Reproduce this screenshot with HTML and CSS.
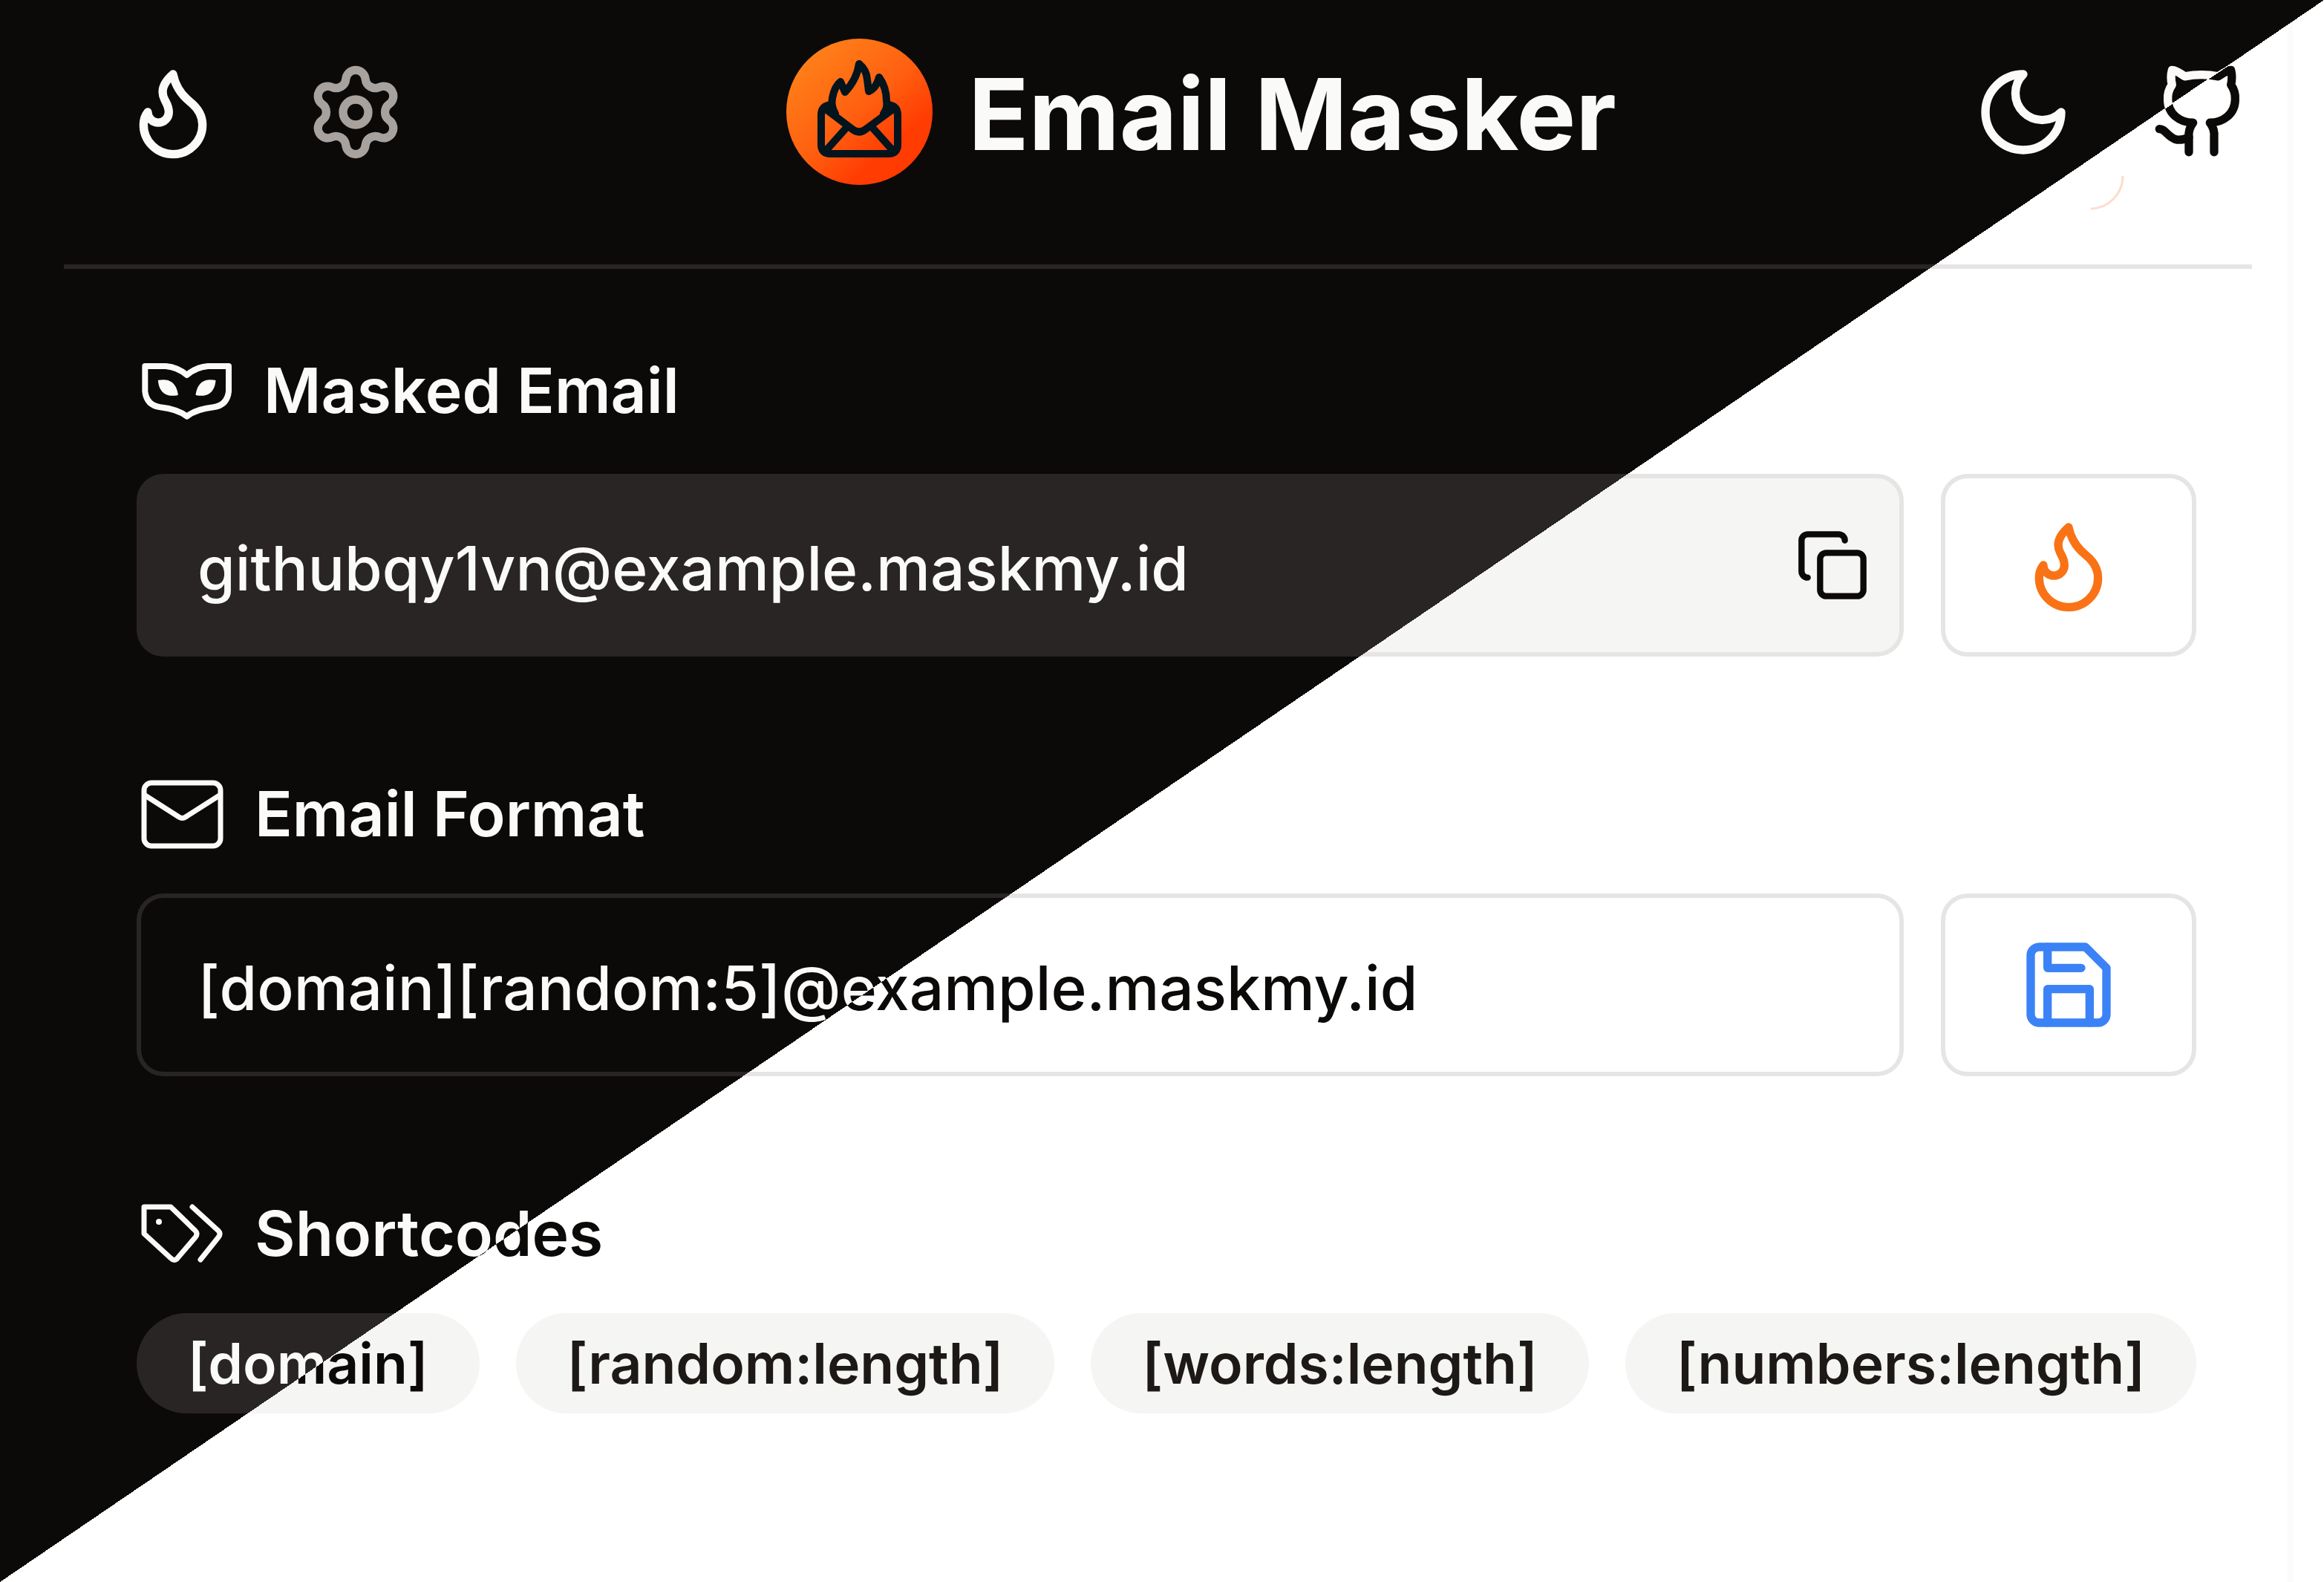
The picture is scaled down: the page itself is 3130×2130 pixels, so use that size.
FILE: index.html
```html
<!DOCTYPE html>
<html lang="en">
<head>
<meta charset="utf-8">
<meta name="viewport" content="width=device-width, initial-scale=1">
<title>Email Masker</title>
<link rel="stylesheet" href="styles.css">
</head>
<body>
<header class="header">
  <nav class="nav nav-start" aria-label="Views">
    <button class="icon-button" type="button" aria-label="Mask">
      <svg class="icon" viewBox="0 0 24 24"><path d="M8.5 14.5A2.5 2.5 0 0 0 11 12c0-1.38-.5-2-1-3-1.072-2.143-.224-4.054 2-6 .5 2.5 2 4.9 4 6.5 2 1.6 3 3.5 3 5.5a7 7 0 1 1-14 0c0-1.153.433-2.294 1-3a2.5 2.5 0 0 0 2.5 2.5z"/></svg>
    </button>
    <button class="icon-button muted" type="button" aria-label="Settings">
      <svg class="icon" viewBox="0 0 24 24"><path d="M9.671 4.136a2.34 2.34 0 0 1 4.659 0 2.34 2.34 0 0 0 3.319 1.915 2.34 2.34 0 0 1 2.33 4.033 2.34 2.34 0 0 0 0 3.831 2.34 2.34 0 0 1-2.33 4.033 2.34 2.34 0 0 0-3.319 1.915 2.34 2.34 0 0 1-4.659 0 2.34 2.34 0 0 0-3.32-1.915 2.34 2.34 0 0 1-2.33-4.033 2.34 2.34 0 0 0 0-3.831A2.34 2.34 0 0 1 6.35 6.051a2.34 2.34 0 0 0 3.319-1.915"/><circle cx="12" cy="12" r="3"/></svg>
    </button>
  </nav>
  <div class="brand">
    <svg class="logo" viewBox="0 0 197 197" aria-hidden="true">
      <defs>
        <linearGradient id="logo-fill" x1="0.15" y1="0.1" x2="0.85" y2="0.9">
          <stop offset="0" stop-color="#ff8019"/><stop offset="0.5" stop-color="#ff5f10"/><stop offset="0.8" stop-color="#ff3d03"/><stop offset="1" stop-color="#ff3a00"/>
        </linearGradient>
      </defs>
      <circle cx="98.500" cy="98.500" r="98.500" fill="url(#logo-fill)"/>
      <g fill="none" stroke="#04141d" stroke-width="10" stroke-linejoin="round" stroke-linecap="round">
        <path d="M61 89Q47 90 47 103V143Q47 155 60 155H137Q150 155 150 143V103Q150 90 136 89"/>
        <path d="M52 94 89 122Q98 129 107 122L145 94"/>
        <path d="M55 149 80 121M142 149 117 121"/>
        <path d="M66 101Q60 91 62 80Q65 64 73 58L79 72Q95 55 98 34Q108 42 109 55L111 71Q121 67 125 52Q135 66 135 84Q137 93 131 101"/>
      </g>
    </svg>
    <h1 class="title">Email Masker</h1>
  </div>
  <nav class="nav nav-end" aria-label="Links">
    <button class="icon-button" type="button" aria-label="Toggle theme">
      <svg class="icon" viewBox="0 0 24 24"><path d="M12 3a6 6 0 0 0 9 9 9 9 0 1 1-9-9Z"/></svg>
    </button>
    <a class="icon-button" href="#github" aria-label="GitHub">
      <svg class="icon" viewBox="0 0 24 24">
        <defs>
          <linearGradient id="split-stroke" gradientUnits="userSpaceOnUse" x1="6.37" y1="-2.92" x2="17.63" y2="13.62">
            <stop offset="0.5" stop-color="#fafaf9"/><stop offset="0.5" stop-color="#0c0a09"/>
          </linearGradient>
        </defs>
        <g stroke="url(#split-stroke)"><path d="M15 21.500v-3.500a4.800 4.800 0 0 0-1-3.500c3 0 6-2 6-5.500.08-1.250-.27-2.480-1-3.500.28-1.150.28-2.350 0-3.500 0 0-1 0-3 1.500-2.640-.5-5.360-.5-8 0C6 2 5 2 5 2c-.3 1.150-.3 2.350 0 3.500A5.403 5.403 0 0 0 4 9c0 3.500 3 5.500 6 5.500-.39.49-.68 1.050-.85 1.650-.17.6-.22 1.230-.15 1.850v3.500"/><path d="M9 18c-4.510 2-5-2-7-2"/></g>
      </svg>
    </a>
  </nav>
  <svg class="glow" viewBox="0 0 48 48" aria-hidden="true"><path d="M46 2A44 44 0 0 1 3 46" fill="none" stroke="#fedccb" stroke-width="3"/></svg>
</header>

<main class="main">
  <section class="section section-masked">
    <label class="label" for="masked">
      <svg class="glyph mask" viewBox="30 33 369 231" aria-hidden="true">
        <path d="M46 48H130Q178 52 215 84Q252 52 300 48H384V150Q378 206 322 214Q252 222 215 251Q178 222 108 214Q52 206 46 150Z" fill="none" stroke="currentColor" stroke-width="24" stroke-linejoin="round"/>
        <path d="M102 108Q165 96 176 162Q110 174 102 108ZM328 108Q265 96 254 162Q320 174 328 108Z" fill="currentColor" stroke="currentColor" stroke-width="7" stroke-linejoin="round"/>
      </svg>
      <span>Masked Email</span>
    </label>
    <div class="row">
      <div class="field field-filled">
        <input class="input" id="masked" type="text" readonly value="githubqy1vn@example.maskmy.id">
        <button class="copy" type="button" aria-label="Copy">
          <svg viewBox="0 0 24 24"><rect x="8" y="8" width="14" height="14" rx="2"/><path d="M4 16c-1.100 0-2-.9-2-2V4c0-1.100.9-2 2-2h10c1.100 0 2 .9 2 2"/></svg>
        </button>
      </div>
      <button class="action action-fire" type="button" aria-label="Generate">
        <svg class="icon" viewBox="0 0 24 24"><path d="M8.5 14.5A2.5 2.5 0 0 0 11 12c0-1.38-.5-2-1-3-1.072-2.143-.224-4.054 2-6 .5 2.5 2 4.9 4 6.5 2 1.6 3 3.5 3 5.5a7 7 0 1 1-14 0c0-1.153.433-2.294 1-3a2.5 2.5 0 0 0 2.5 2.5z"/></svg>
      </button>
    </div>
  </section>

  <section class="section">
    <label class="label" for="format">
      <svg class="glyph mail" viewBox="0 0 111 93" aria-hidden="true">
        <g fill="none" stroke="currentColor" stroke-width="7" stroke-linejoin="round"><rect x="4" y="4" width="103" height="85" rx="10"/><path d="M4 20 51 50Q55.500 53 60 50L107 20"/></g>
      </svg>
      <span>Email Format</span>
    </label>
    <div class="row">
      <div class="field">
        <input class="input split-text" id="format" type="text" value="[domain][random:5]@example.maskmy.id">
      </div>
      <button class="action action-save" type="button" aria-label="Save">
        <svg class="icon" viewBox="0 0 24 24"><path d="M19 21H5a2 2 0 0 1-2-2V5a2 2 0 0 1 2-2h11l5 5v11a2 2 0 0 1-2 2z"/><path d="M17 21v-8H7v8M7 3v5h8"/></svg>
      </button>
    </div>
  </section>

  <section class="section">
    <h2 class="label">
      <svg class="glyph tags" viewBox="0 0 111 80" aria-hidden="true">
        <g fill="none" stroke="currentColor" stroke-width="7" stroke-linejoin="round" stroke-linecap="round"><path d="M4 4H40L73 36Q77 40 73 45L49 73Q45 78 40 73L4 40Z"/><path d="M69 4 104 36Q108 40 104 45L80 75"/></g>
        <circle cx="24" cy="24" r="4" fill="currentColor"/>
      </svg>
      <span class="split-text">Shortcodes</span>
    </h2>
    <div class="chips">
      <button class="chip chip-split" type="button"><span class="split-text">[domain]</span></button>
      <button class="chip" type="button">[random:length]</button>
      <button class="chip" type="button">[words:length]</button>
      <button class="chip" type="button">[numbers:length]</button>
    </div>
  </section>
</main>
</body>
</html>
```
FILE: styles.css
```css
/* Dark theme above the window's diagonal, light theme below it. */
:root {
  --dark-bg: #0c0a09;
  --dark-fg: #fafaf9;
  --dark-muted: #292524;
  --light-bg: #ffffff;
  --light-fg: #0c0a09;
  --light-muted: #f5f5f3;
  --light-border: #e7e5e4;
  --split-fg: linear-gradient(to bottom right, var(--dark-fg) 50%, var(--light-fg) 50%);
  --split-bg: linear-gradient(to bottom right, var(--dark-bg) 50%, var(--light-bg) 50%);
  --split-muted: linear-gradient(to bottom right, var(--dark-muted) 50%, var(--light-muted) 50%);
  --split-border: linear-gradient(to bottom right, var(--dark-muted) 50%, var(--light-border) 50%);
}

* { box-sizing: border-box; }

body {
  margin: 0;
  min-height: 100vh;
  font-family: Inter, "Liberation Sans", sans-serif;
  color: var(--dark-fg);
  background:
    linear-gradient(to bottom right, var(--dark-bg) 50%, transparent 50%) fixed,
    linear-gradient(to left, transparent 42px, #fbfbfb 42px, #fbfbfb 49px, transparent 49px) fixed,
    var(--light-bg);
}

button, input { font: inherit; color: inherit; margin: 0; }
button { cursor: pointer; }

.icon {
  display: block;
  width: 136px;
  height: 136px;
  fill: none;
  stroke: currentColor;
  stroke-width: 2;
  stroke-linecap: round;
  stroke-linejoin: round;
}

.header {
  position: relative;
  display: grid;
  grid-template-columns: auto 1fr auto;
  align-items: center;
  margin: 0 97px 0 86px;
  padding: 52px 0 107px;
  border-bottom: 6px solid transparent;
  background: var(--split-bg) fixed padding-box, var(--split-border) fixed border-box;
}

.nav { display: flex; gap: 110px; }
.nav-start { padding-left: 79px; }
.nav-end { gap: 104px; }

.icon-button {
  display: block;
  padding: 0;
  border: 0;
  background: none;
  color: var(--dark-fg);
}
.muted { color: #a8a29e; }

.brand {
  display: flex;
  align-items: center;
  justify-content: center;
  gap: 48px;
  padding-left: 32px;
}
.logo { display: block; width: 197px; height: 197px; }
.title {
  margin: 0;
  padding-top: 4px;
  font-size: 134px;
  line-height: 160px;
  font-weight: 700;
  white-space: nowrap;
}

.glow { position: absolute; right: 172px; top: 235px; width: 48px; height: 48px; }

.main {
  display: flex;
  flex-direction: column;
  gap: 164px;
  padding: 116px 172px 120px 184px;
}

.section { display: flex; flex-direction: column; gap: 59px; }
.section-masked { gap: 64px; }

.label {
  display: flex;
  align-items: center;
  gap: 42px;
  margin: 0;
  padding-left: 6px;
  font-size: 84px;
  line-height: 96px;
  font-weight: 600;
}
.glyph { display: block; flex: none; }
.mask { width: 123px; height: 77px; }
.mail { width: 111px; height: 93px; }
.tags { width: 111px; height: 80px; }

.split-text {
  background: var(--split-fg) fixed;
  -webkit-background-clip: text;
  background-clip: text;
  -webkit-text-fill-color: transparent;
}

.row { display: flex; gap: 50px; }

.field {
  flex: 1;
  display: flex;
  align-items: center;
  height: 246px;
  padding: 0 40px 0 76px;
  border: 6px solid transparent;
  border-radius: 36px;
  background: var(--split-bg) fixed padding-box, var(--split-border) fixed border-box;
}
.field-filled { background: var(--split-muted) fixed padding-box, var(--split-border) fixed border-box; }

.input {
  flex: 1;
  min-width: 0;
  height: 128px;
  padding: 8px 0 0;
  border: 0;
  outline: 0;
  font-size: 82px;
  font-weight: 500;
  background-color: transparent;
}

.copy { padding: 0; border: 0; background: none; color: var(--light-fg); }
.copy svg {
  display: block;
  width: 100px;
  height: 100px;
  fill: none;
  stroke: currentColor;
  stroke-width: 2;
  stroke-linecap: round;
  stroke-linejoin: round;
}

.action {
  display: grid;
  place-items: center;
  width: 344px;
  padding: 0;
  border: 6px solid var(--light-border);
  border-radius: 36px;
  background: var(--light-bg);
}
.action-fire { color: #f97316; }
.action-save { color: #3b82f6; }

.chips { display: flex; flex-wrap: wrap; gap: 49px; }
.chip {
  flex: 1 1 auto;
  padding: 0 56px;
  border: 0;
  border-radius: 68px;
  font-size: 75px;
  line-height: 135px;
  font-weight: 600;
  white-space: nowrap;
  color: #1c1917;
  background: var(--light-muted);
}
.chip-split { background: var(--split-muted) fixed; }
```
